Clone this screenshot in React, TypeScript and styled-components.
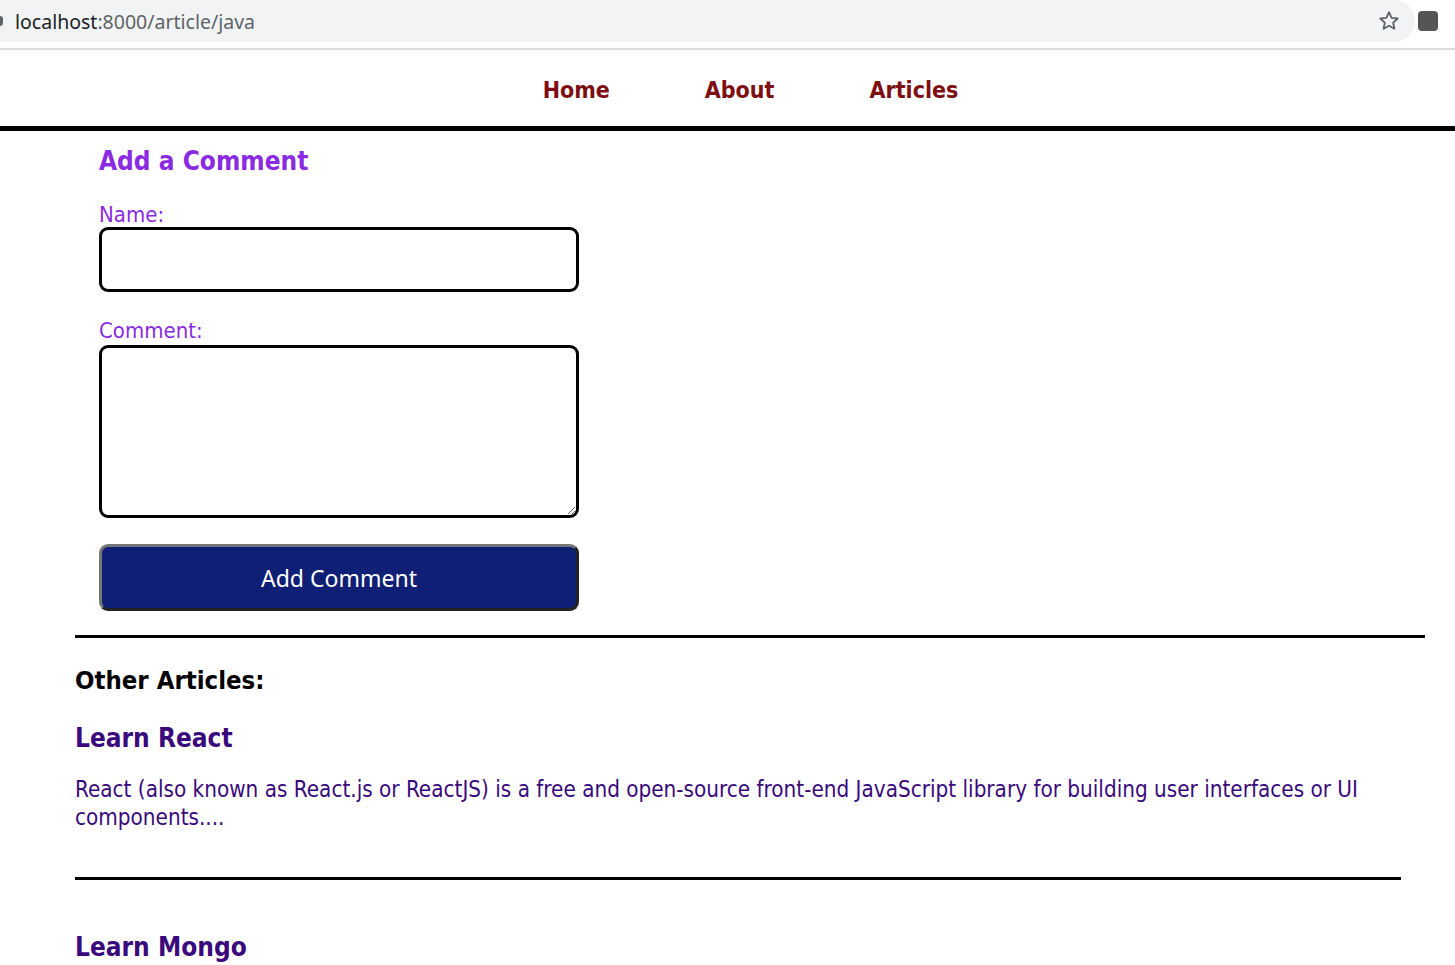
import React from "react";
import styled, { createGlobalStyle } from "styled-components";

const GlobalStyle = createGlobalStyle`
  body {
    margin: 0;
    background: #fff;
    font-family: "DejaVu Sans Condensed", "DejaVu Sans", sans-serif;
  }
`;

const articles = [
  {
    name: "react",
    title: "Learn React",
    text: "React (also known as React.js or ReactJS) is a free and open-source front-end JavaScript library for building user interfaces or UI components....",
  },
  {
    name: "mongo",
    title: "Learn Mongo",
    text: "MongoDB is a source-available cross-platform document-oriented database program....",
  },
];

const App = () => {
  return (
    <Page>
      <GlobalStyle />
      <AddressBar>
        <UrlPill>
          <Dot />
          <Url>
            localhost<UrlMuted>:8000/article/java</UrlMuted>
          </Url>
          <Star viewBox="0 0 24 24">
            <path
              d="M12 3.2l2.6 5.6 6.1.7-4.5 4.2 1.2 6-5.4-3-5.4 3 1.2-6-4.5-4.2 6.1-.7z"
              fill="none"
              stroke="#5f6368"
              strokeWidth="1.8"
              strokeLinejoin="round"
            />
          </Star>
        </UrlPill>
        <ExtIcon />
      </AddressBar>

      <Nav>
        <NavLink href="#">Home</NavLink>
        <NavLink href="#">About</NavLink>
        <NavLink href="#">Articles</NavLink>
      </Nav>

      <Main>
        <CommentForm onSubmit={(e) => e.preventDefault()}>
          <FormTitle>Add a Comment</FormTitle>
          <Label>
            Name:
            <TextInput type="text" />
          </Label>
          <Label>
            Comment:
            <TextArea />
          </Label>
          <SubmitButton type="submit">Add Comment</SubmitButton>
        </CommentForm>

        <Rule />
        <SectionTitle>Other Articles:</SectionTitle>

        {articles.map((article) => (
          <ArticleItem key={article.name}>
            <ArticleTitle href="#">{article.title}</ArticleTitle>
            <ArticleText>{article.text}</ArticleText>
            <ItemRule />
          </ArticleItem>
        ))}
      </Main>
    </Page>
  );
};

export default App;

const Page = styled.div`
  min-height: 100vh;
`;

const AddressBar = styled.div`
  height: 48px;
  border-bottom: 2px solid #dadce0;
  display: flex;
  align-items: flex-start;
  background: #fff;
  overflow: hidden;
`;

const UrlPill = styled.div`
  height: 42px;
  width: 1435px;
  margin-left: -20px;
  flex-shrink: 0;
  background: #f1f3f4;
  border-radius: 0 21px 21px 0;
  display: flex;
  align-items: center;
  padding-left: 16px;
  box-sizing: border-box;
`;

const Dot = styled.span`
  width: 7px;
  height: 10px;
  border-radius: 3px;
  background: #5f6368;
  margin-right: 12px;
`;

const Url = styled.span`
  flex: 1;
  font-family: "Noto Sans", "Open Sans", sans-serif;
  font-size: 19.5px;
  color: #202124;
`;

const UrlMuted = styled.span`
  color: #5f6368;
`;

const Star = styled.svg`
  width: 24px;
  height: 24px;
  margin-right: 14px;
`;

const ExtIcon = styled.span`
  width: 20px;
  height: 20px;
  margin: 11px 0 0 3px;
  border-radius: 4px;
  background: #555;
  flex-shrink: 0;
`;

const Nav = styled.nav`
  height: 81px;
  border-bottom: 5px solid #000;
  display: flex;
  justify-content: center;
  align-items: center;
  gap: 95px;
  padding: 3px 0 0 46px;
  box-sizing: border-box;
`;

const NavLink = styled.a`
  color: #7d0f12;
  font-weight: bold;
  font-size: 23px;
  text-decoration: none;
`;

const Main = styled.main`
  padding: 0 30px 0 75px;
`;

const CommentForm = styled.form`
  width: 480px;
  margin-left: 24px;
  display: flex;
  flex-direction: column;
  padding-bottom: 24px;
`;

const FormTitle = styled.h3`
  margin: 15px 0 26px;
  color: #8a2be2;
  font-size: 26px;
  font-weight: bold;
`;

const Label = styled.label`
  display: flex;
  flex-direction: column;
  color: #8a2be2;
  font-size: 22px;
  margin-bottom: 26px;
`;

const TextInput = styled.input`
  height: 65px;
  box-sizing: border-box;
  border: 3px solid #000;
  border-radius: 9px;
  font-size: 20px;
  padding: 0 10px;
`;

const TextArea = styled.textarea`
  height: 173px;
  box-sizing: border-box;
  border: 3px solid #000;
  border-radius: 9px;
  font-size: 20px;
  padding: 8px 10px;
  margin-top: 2px;
`;

const SubmitButton = styled.button`
  height: 67px;
  border: 3px solid;
  border-color: #777 #222 #222 #777;
  border-radius: 9px;
  background: #0f1f75;
  color: #fff;
  font-family: "Noto Sans", "Open Sans", sans-serif;
  font-size: 23px;
  cursor: pointer;
`;

const Rule = styled.hr`
  margin: 0;
  border: none;
  border-top: 3px solid #000;
`;

const SectionTitle = styled.h3`
  margin: 27px 0 28px;
  font-size: 25.5px;
  font-weight: bold;
  color: #000;
`;

const ArticleItem = styled.div`
  padding-right: 24px;
`;

const ArticleTitle = styled.a`
  display: block;
  color: #3a0a7c;
  font-size: 26px;
  font-weight: bold;
  text-decoration: none;
`;

const ArticleText = styled.p`
  margin: 22px 0 46px;
  color: #3a0a7c;
  font-size: 22.3px;
  line-height: 28px;
`;

const ItemRule = styled.hr`
  margin: 0 0 52px;
  border: none;
  border-top: 3px solid #000;
`;
